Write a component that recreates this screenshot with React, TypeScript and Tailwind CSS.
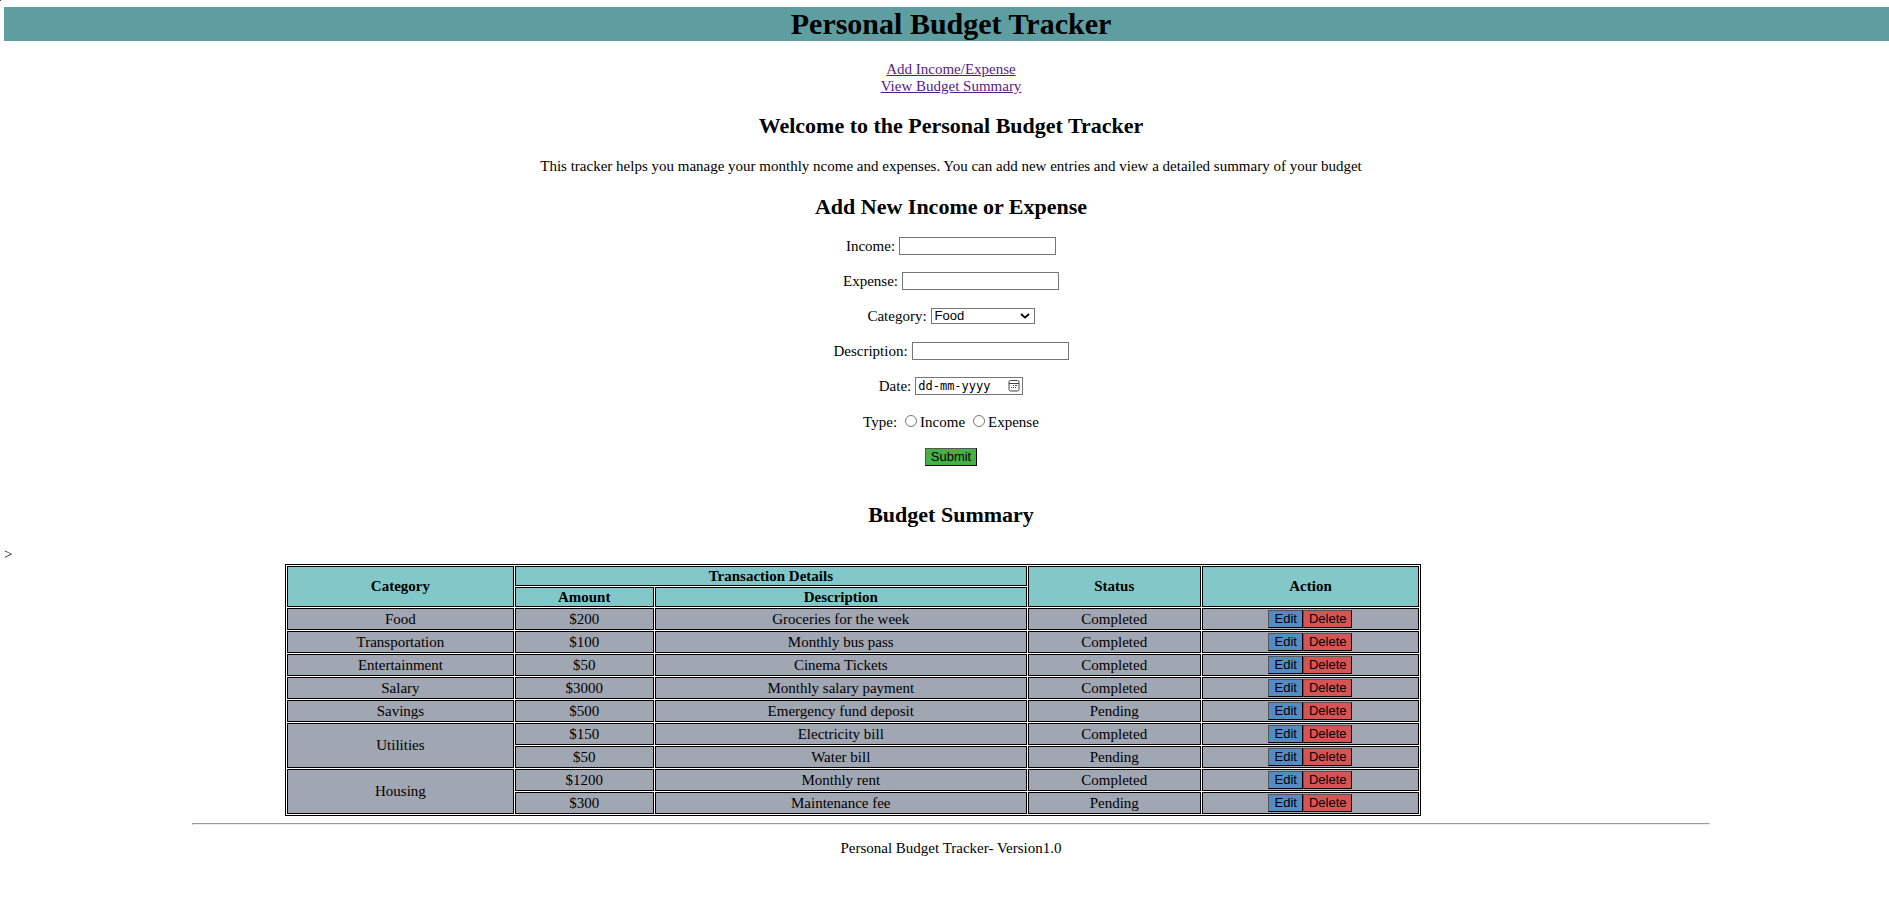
import React from "react";

type Entry = {
  category?: string;
  span?: number;
  amount: string;
  description: string;
  status: "Completed" | "Pending";
};

const entries: Entry[] = [
  { category: "Food", amount: "$200", description: "Groceries for the week", status: "Completed" },
  { category: "Transportation", amount: "$100", description: "Monthly bus pass", status: "Completed" },
  { category: "Entertainment", amount: "$50", description: "Cinema Tickets", status: "Completed" },
  { category: "Salary", amount: "$3000", description: "Monthly salary payment", status: "Completed" },
  { category: "Savings", amount: "$500", description: "Emergency fund deposit", status: "Pending" },
  { category: "Utilities", span: 2, amount: "$150", description: "Electricity bill", status: "Completed" },
  { amount: "$50", description: "Water bill", status: "Pending" },
  { category: "Housing", span: 2, amount: "$1200", description: "Monthly rent", status: "Completed" },
  { amount: "$300", description: "Maintenance fee", status: "Pending" },
];

const sans = "font-['Liberation_Sans',Arial,sans-serif]";
const field = "h-[18px] w-[157px] border border-[#767676] bg-white px-px text-[13px] outline-none";
const button = `${sans} h-[18px] border border-t-[#555] border-l-[#555] border-r-black border-b-black px-[5px] text-[13px] leading-4`;
const head = "h-5 border border-black bg-[#82c8c8] p-0 font-bold";
const cell = "h-[22px] border border-black bg-[#a0a6b2] p-0";
const heading = "text-[22px] leading-[25px] font-bold";
const radio = "mb-[3px] h-3 w-3 appearance-none rounded-full border border-[#767676]";

function ChevronIcon() {
  return (
    <svg viewBox="0 0 10 6" className="pointer-events-none absolute top-[5px] right-[5px] h-[6px] w-[10px]" aria-hidden="true">
      <path d="M1 1l4 3.6L9 1" fill="none" stroke="black" strokeWidth="1.8" />
    </svg>
  );
}

function CalendarIcon() {
  return (
    <svg viewBox="0 0 12 12" className="h-3 w-3" aria-hidden="true">
      <rect x="1" y="0.5" width="10" height="10.5" rx="1.5" fill="none" stroke="#444" />
      <path d="M1 3.5h10" stroke="#444" />
      <path d="M5 5.5h1M7 5.5h2M3 7.5h1M5 7.5h1M7 7.5h1" stroke="#444" />
    </svg>
  );
}

export default function App() {
  return (
    <div className="overflow-hidden bg-white font-['Liberation_Serif','Times_New_Roman',serif] text-[15px] leading-[17px] text-black">
      <span className="absolute top-0 left-0 h-px w-px bg-[#444]" />
      <div className="-mr-[9px] ml-1 pt-[7px] pb-8">
        <header>
          <h1 className="bg-[#5f9ea0] text-center text-[30px] leading-[34px] font-bold">Personal Budget Tracker</h1>
          <nav className="mt-5 flex flex-col items-center">
            <a href="#add" className="text-[#551a8b] underline">Add Income/Expense</a>
            <a href="#summary" className="text-[#551a8b] underline">View Budget Summary</a>
          </nav>
        </header>

        <section className="mt-[18px] text-center">
          <h2 className={heading}>Welcome to the Personal Budget Tracker</h2>
          <p className="mt-5">
            This tracker helps you manage your monthly ncome and expenses. You can add new entries and view a detailed
            summary of your budget
          </p>
        </section>

        <section id="add" className="mt-[19px] text-center">
          <h2 className={heading}>Add New Income or Expense</h2>
          <form className="mt-[18px] flex flex-col items-center gap-[17px]" onSubmit={(e) => e.preventDefault()}>
            <div className="flex items-center gap-1">
              <label htmlFor="income">Income:</label>
              <input id="income" type="text" className={`${field} ${sans}`} />
            </div>
            <div className="flex items-center gap-1">
              <label htmlFor="expense">Expense:</label>
              <input id="expense" type="text" className={`${field} ${sans}`} />
            </div>
            <div className="flex h-[18px] items-center gap-1">
              <label htmlFor="category">Category:</label>
              <div className="relative flex">
                <select
                  id="category"
                  defaultValue="Food"
                  className={`${sans} h-4 w-[104px] appearance-none border border-[#767676] bg-white pl-[3px] text-[13px] leading-[14px]`}
                >
                  <option>Food</option>
                  <option>Transportation</option>
                  <option>Entertainment</option>
                  <option>Salary</option>
                  <option>Savings</option>
                  <option>Utilities</option>
                  <option>Housing</option>
                </select>
                <ChevronIcon />
              </div>
            </div>
            <div className="flex items-center gap-1">
              <label htmlFor="description">Description:</label>
              <input id="description" type="text" className={`${field} ${sans}`} />
            </div>
            <div className="flex items-center gap-1">
              <label htmlFor="date">Date:</label>
              <div className="flex h-[18px] w-[108px] items-center justify-between border border-[#767676] pr-0.5 pl-0.5">
                <input
                  id="date"
                  type="text"
                  placeholder="dd-mm-yyyy"
                  className="h-4 w-20 bg-transparent font-['DejaVu_Sans_Mono',monospace] text-[12px] leading-4 outline-none placeholder:text-black"
                />
                <button type="button" aria-label="Open calendar">
                  <CalendarIcon />
                </button>
              </div>
            </div>
            <div className="flex h-[19px] items-center gap-2 pt-px">
              <span>Type:</span>
              <label className="flex items-center gap-[3px]">
                <input type="radio" name="type" className={radio} />
                Income
              </label>
              <label className="flex items-center gap-[3px]">
                <input type="radio" name="type" className={radio} />
                Expense
              </label>
            </div>
            <button type="submit" className={`${button} bg-[#46b046]`}>Submit</button>
          </form>
        </section>

        <section id="summary" className="mt-9">
          <h2 className={`${heading} text-center`}>Budget Summary</h2>
          <p className="mt-[19px]">&gt;</p>
          <table className="mt-px ml-[281px] w-3/5 table-fixed border-separate border-spacing-px border border-black text-center">
            <colgroup>
              <col className="w-[20.1%]" />
              <col className="w-[12.3%]" />
              <col className="w-[33%]" />
              <col className="w-[15.3%]" />
              <col className="w-[19.3%]" />
            </colgroup>
            <thead>
              <tr>
                <th rowSpan={2} className={head}>Category</th>
                <th colSpan={2} className={head}>Transaction Details</th>
                <th rowSpan={2} className={head}>Status</th>
                <th rowSpan={2} className={head}>Action</th>
              </tr>
              <tr>
                <th className={head}>Amount</th>
                <th className={head}>Description</th>
              </tr>
            </thead>
            <tbody>
              {entries.map((entry) => (
                <tr key={entry.description}>
                  {entry.category && (
                    <td rowSpan={entry.span ?? 1} className={cell}>{entry.category}</td>
                  )}
                  <td className={cell}>{entry.amount}</td>
                  <td className={cell}>{entry.description}</td>
                  <td className={cell}>{entry.status}</td>
                  <td className={cell}>
                    <div className="flex justify-center">
                      <button type="button" className={`${button} bg-[#548bc4]`}>Edit</button>
                      <button type="button" className={`${button} bg-[#d65454]`}>Delete</button>
                    </div>
                  </td>
                </tr>
              ))}
            </tbody>
          </table>
        </section>

        <hr className="mx-auto mt-[7px] box-content w-4/5 border border-t-[#9a9a9a] border-r-[#eee] border-b-[#eee] border-l-[#9a9a9a]" />
        <footer className="mt-[15px] text-center">Personal Budget Tracker- Version1.0</footer>
      </div>
    </div>
  );
}
